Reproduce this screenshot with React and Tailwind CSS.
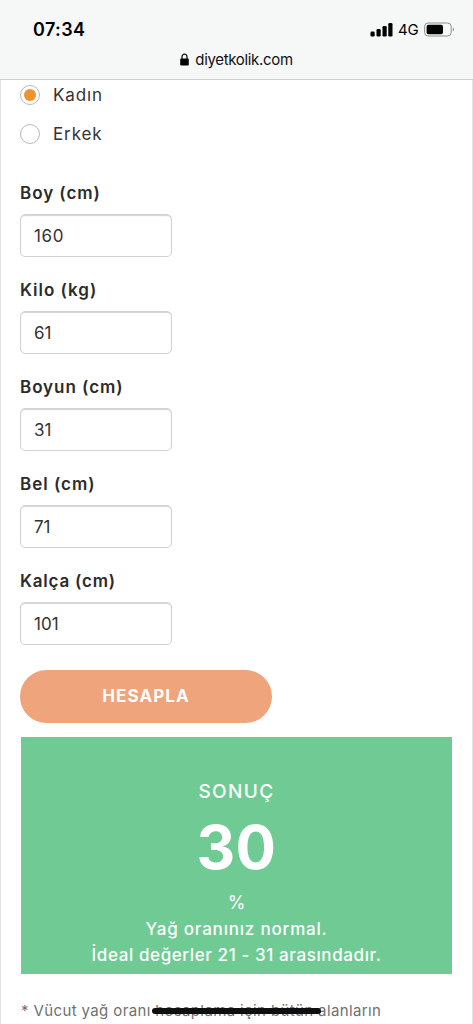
import { useState } from 'react'

const fields = [
  { id: 'boy', label: 'Boy (cm)', labelClass: 'tracking-[0.95px]', inputClass: 'tracking-[0.7px]' },
  { id: 'kilo', label: 'Kilo (kg)', labelClass: 'tracking-[0.98px]', inputClass: 'tracking-[0px]' },
  { id: 'boyun', label: 'Boyun (cm)', labelClass: 'tracking-[0.94px]', inputClass: 'tracking-[0px]' },
  { id: 'bel', label: 'Bel (cm)', labelClass: 'tracking-[0.98px]', inputClass: 'tracking-[0px]' },
  { id: 'kalca', label: 'Kalça (cm)', labelClass: 'tracking-[0.79px]', inputClass: 'tracking-[0px]' }
]

function StatusBar() {
  return (
    <div className="flex h-[44px] items-center justify-between pt-[14px] pl-[33px] pr-[18px] text-black">
      <span className="pt-[2px] text-[18px] leading-[24px] font-semibold tracking-[0.4px]">07:34</span>
      <div className="flex items-center">
        <svg width="23" height="15" viewBox="0 0 23 15" fill="black">
          <rect x="0.5" y="9.5" width="4.2" height="5" rx="1.3" />
          <rect x="6.5" y="7" width="4.2" height="7.5" rx="1.3" />
          <rect x="12.5" y="4" width="4.2" height="10.5" rx="1.3" />
          <rect x="18.3" y="1" width="4.2" height="13.5" rx="1.3" />
        </svg>
        <span className="ml-[5px] w-[21px] pt-[1px] text-[15px] leading-[20px] tracking-[-0.2px]">4G</span>
        <svg className="ml-[5px]" width="31" height="15" viewBox="0 0 31 15">
          <rect x="0.6" y="1" width="26.6" height="13" rx="3.6" fill="none" stroke="#8e8e8e" />
          <rect x="2.6" y="2.8" width="16.4" height="9.4" rx="2" fill="black" />
          <path d="M28.8 5.4c1.6.7 1.6 3.5 0 4.2z" fill="#8e8e8e" />
        </svg>
      </div>
    </div>
  )
}

function AddressBar() {
  return (
    <div className="flex h-[31px] items-center justify-center">
      <svg className="mr-[6px]" width="9" height="13" viewBox="0 0 9 13">
        <path d="M2 6V3.6a2.5 2.5 0 0 1 5 0V6" fill="none" stroke="black" strokeWidth="1.2" />
        <rect x="0.2" y="5.6" width="8.6" height="7" rx="1.1" fill="black" />
      </svg>
      <span className="text-[15px] leading-[20px] tracking-[-0.33px] text-[#111111]">diyetkolik.com</span>
    </div>
  )
}

function Radio({ label, checked, onChange }) {
  return (
    <label className="flex h-5 items-center gap-[13px]">
      <input type="radio" name="gender" checked={checked} onChange={onChange} className="sr-only" />
      <span className="flex h-5 w-5 items-center justify-center rounded-full border border-[#b9b9b9] bg-white">
        {checked && <span className="h-3 w-3 rounded-full bg-[#f0922f]" />}
      </span>
      <span className="text-[17px] leading-5 tracking-[0.9px] text-[#333333]">{label}</span>
    </label>
  )
}

export default function App() {
  const [gender, setGender] = useState('kadin')
  const [values, setValues] = useState({ boy: '160', kilo: '61', boyun: '31', bel: '71', kalca: '101' })

  return (
    <div className="h-[1024px] w-full overflow-hidden bg-white font-['Inter',sans-serif]">
      <header className="h-[80px] border-b border-[#cfcfcf] bg-[#f6f7f7]">
        <StatusBar />
        <AddressBar />
      </header>

      <main className="h-[944px] border-x border-[#e3e3e3] pl-[19px] pr-[20px] pt-[5px]">
        <div className="flex flex-col gap-[19px]">
          <Radio label="Kadın" checked={gender === 'kadin'} onChange={() => setGender('kadin')} />
          <Radio label="Erkek" checked={gender === 'erkek'} onChange={() => setGender('erkek')} />
        </div>

        <div className="mt-[39px] flex flex-col gap-[23px]">
          {fields.map((f) => (
            <div key={f.id} className="h-[74px]">
              <label htmlFor={f.id} className={`block h-[31px] text-[17px] leading-5 font-semibold text-[#2b2b2b] ${f.labelClass}`}>
                {f.label}
              </label>
              <input
                id={f.id}
                type="text"
                value={values[f.id]}
                onChange={(e) => setValues({ ...values, [f.id]: e.target.value })}
                className={`block h-[43px] w-[152px] rounded-[5px] border border-[#d2d2d2] bg-white px-[13px] text-[17px] text-[#333333] shadow-[inset_0_1px_1px_#d4d4d4] outline-none ${f.inputClass}`}
              />
            </div>
          ))}
        </div>

        <button type="button" className="mt-[25px] block h-[53px] w-[252px] rounded-full bg-[#efa47b] text-[17px] font-bold tracking-[1.1px] text-white">
          HESAPLA
        </button>

        <section className="mt-[14px] ml-[1px] flex h-[237px] flex-col items-center bg-[#6fcb93] pt-[43px] text-center text-white">
          <h2 className="text-[19px] leading-6 font-medium tracking-[1.4px]">SONUÇ</h2>
          <p className="mt-[11px] text-[60px] leading-[64px] font-bold tracking-[0.5px]">30</p>
          <p className="mt-[13px] text-[18px] leading-[22px]">%</p>
          <p className="mt-[2px] text-[17px] leading-[26px] font-medium whitespace-nowrap tracking-[0.8px]">Yağ oranınız normal.</p>
          <p className="text-[17px] leading-[26px] font-medium whitespace-nowrap tracking-[0.6px]">İdeal değerler 21 - 31 arasındadır.</p>
        </section>

        <p className="relative mt-[26px] ml-[1px] text-[15px] leading-[22px] whitespace-nowrap text-[#707070] tracking-[0.38px]">
          * Vücut yağ oranı hesaplama için bütün alanların
          <span className="absolute top-[8px] left-[131px] h-[6px] w-[169px] rounded-full bg-[#0d100e]" />
        </p>
      </main>
    </div>
  )
}
